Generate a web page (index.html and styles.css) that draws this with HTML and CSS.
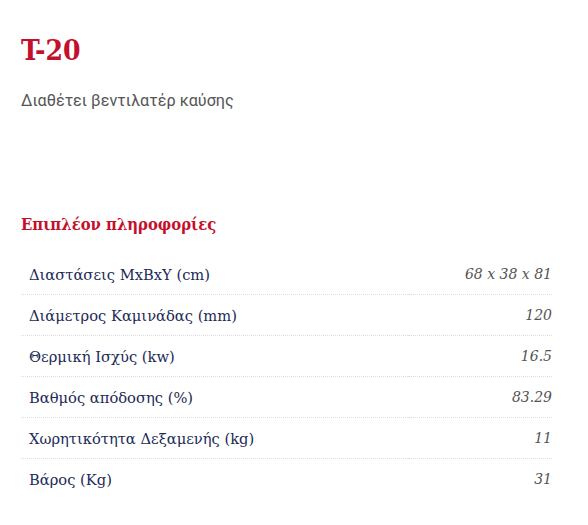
FILE: index.html
```html
<!DOCTYPE html>
<html lang="el">
<head>
<meta charset="utf-8">
<link rel="stylesheet" href="styles.css">
</head>
<body>
<main class="product">
  <h1 class="title">T-20</h1>
  <p class="desc">Διαθέτει βεντιλατέρ καύσης</p>
  <h2 class="section">Επιπλέον πληροφορίες</h2>
  <table class="specs">
    <tr><th>Διαστάσεις MxBxY (cm)</th><td>68 x 38 x 81</td></tr>
    <tr><th>Διάμετρος Καμινάδας (mm)</th><td>120</td></tr>
    <tr><th>Θερμική Ισχύς (kw)</th><td>16.5</td></tr>
    <tr><th>Βαθμός απόδοσης (%)</th><td>83.29</td></tr>
    <tr><th>Χωρητικότητα Δεξαμενής (kg)</th><td>11</td></tr>
    <tr><th>Βάρος (Kg)</th><td>31</td></tr>
  </table>
</main>
</body>
</html>
```
FILE: styles.css
```css
html, body { margin: 0; padding: 0; background: #fff; }
.product {
  width: 531px;
  padding: 33px 0 0 21px;
}
.title {
  margin: 0;
  font-family: "DejaVu Serif", serif;
  font-stretch: condensed;
  font-weight: bold;
  font-size: 28px;
  line-height: 36px;
  color: #c4102b;
}
.desc {
  margin: 21px 0 0;
  font-family: Roboto, "Noto Sans", sans-serif;
  font-size: 16.2px;
  line-height: 22px;
  color: #555;
}
.section {
  margin: 100px 0 0;
  font-family: "DejaVu Serif", serif;
  font-stretch: condensed;
  font-weight: bold;
  font-size: 16.5px;
  line-height: 26px;
  color: #c4102b;
}
.specs {
  margin-top: 16px;
  width: 100%;
  border-collapse: collapse;
  font-family: "DejaVu Serif", serif;
  font-size: 14.7px;
}
.specs tr { border-bottom: 1px dotted #ddd; }
.specs tr:last-child { border-bottom: none; }
.specs th, .specs td {
  height: 40px;
  padding: 0 0 0 8px;
  vertical-align: middle;
}
.specs th {
  text-align: left;
  font-weight: normal;
  color: #1c2a57;
}
.specs td {
  text-align: right;
  padding: 0;
  font-size: 14px;
  font-style: italic;
  color: #555;
}
```
